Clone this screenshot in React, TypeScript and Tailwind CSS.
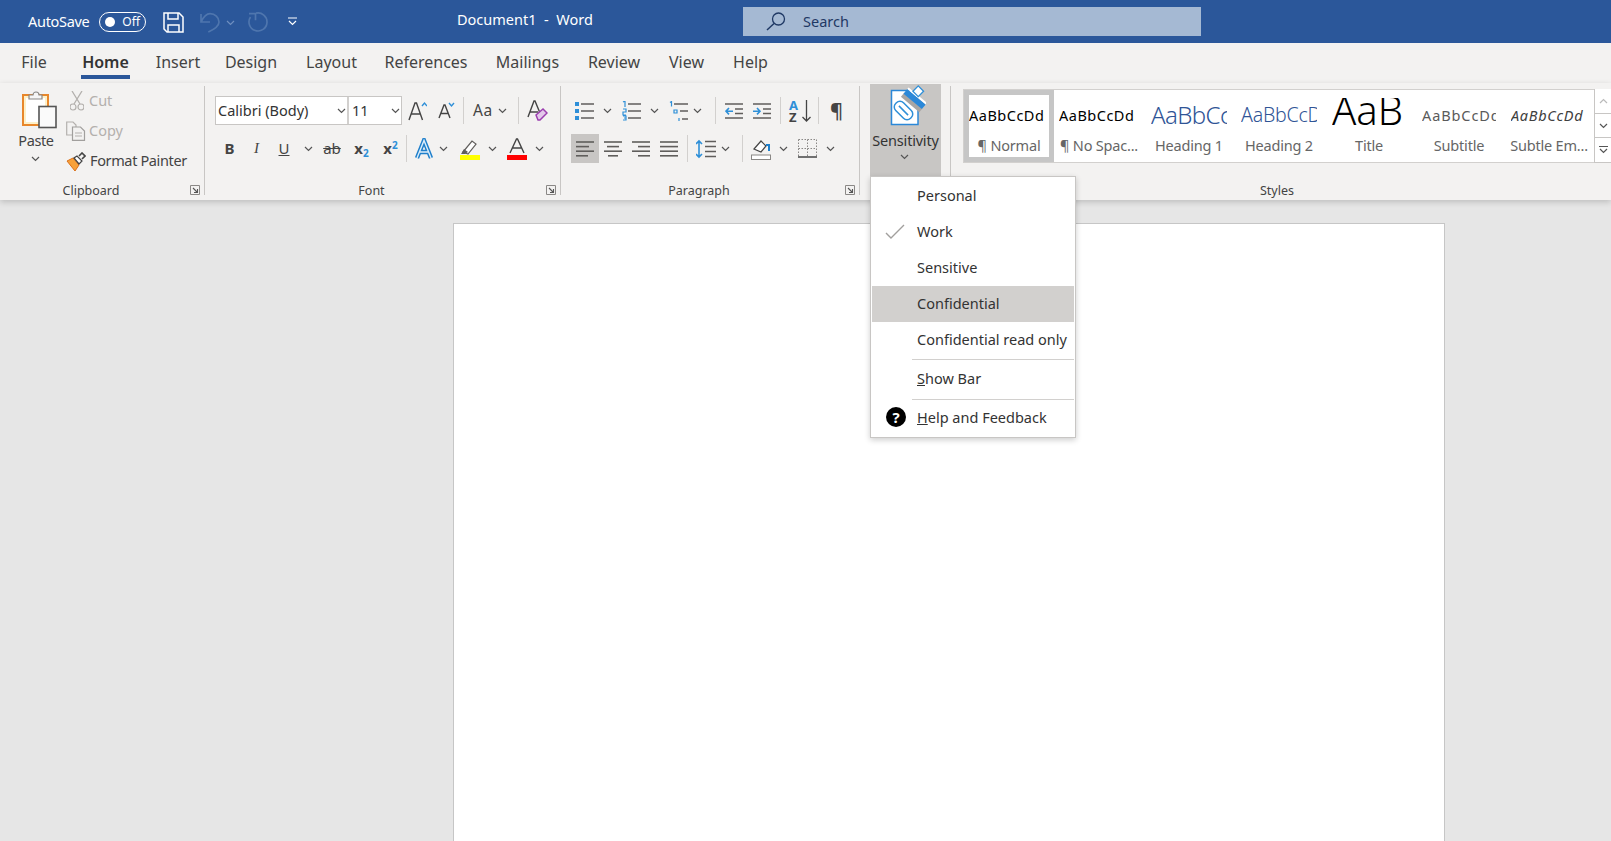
import type { ReactNode } from 'react'

const TABS = [
  { label: 'File', w: 'w-[62px]' },
  { label: 'Home', w: 'w-[81px]' },
  { label: 'Insert', w: 'w-[64px]' },
  { label: 'Design', w: 'w-[82px]' },
  { label: 'Layout', w: 'w-[79px]' },
  { label: 'References', w: 'w-[110px]' },
  { label: 'Mailings', w: 'w-[93px]' },
  { label: 'Review', w: 'w-[80px]' },
  { label: 'View', w: 'w-[65px]' },
  { label: 'Help', w: 'w-[63px]' },
]

const LBLUE = '#2e8fd8'

function Chev({ className = '', color = '#555' }: { className?: string; color?: string }) {
  return (
    <svg width="9" height="6" viewBox="0 0 9 6" className={`shrink-0 ${className}`}>
      <path d="M1 1l3.500 3.500L8 1" fill="none" stroke={color} strokeWidth="1.200" />
    </svg>
  )
}

function Sep({ className = '' }: { className?: string }) {
  return <div className={`w-px h-[27px] bg-[#d2d0ce] shrink-0 ${className}`} />
}

function Launcher() {
  return (
    <svg width="10" height="10" viewBox="0 0 10 10" className="absolute right-[4px] top-[4px]">
      <path d="M.5 9.500v-9h9v9z" fill="none" stroke="#8a8886" />
      <path d="M3 3l4.500 4.500M7.500 4v3.500H4" fill="none" stroke="#555" strokeWidth="1.100" />
    </svg>
  )
}

/* group = content + caption row */
function Group({ label, className, children }: { label: string; className: string; children: ReactNode }) {
  return (
    <div className={`flex flex-col shrink-0 ${className}`}>
      <div className="flex-1 flex flex-col min-h-0">{children}</div>
      <div className="relative h-[19px] pr-[22px] text-center text-[12.5px] leading-[19px] text-[#444]">
        {label}
        <Launcher />
      </div>
    </div>
  )
}

function Lines({ rows, className = '' }: { rows: [number, number][]; className?: string }) {
  return (
    <svg width="18" height="20" viewBox="0 0 18 20" className={`shrink-0 ${className}`}>
      {rows.map(([a, b], i) => (
        <path key={i} d={`M${a} ${3 + i * 4.6}H${b}`} stroke="#605e5c" strokeWidth="1.600" />
      ))}
    </svg>
  )
}

function ListIcon({ marks, className = '' }: { marks: ReactNode; className?: string }) {
  return (
    <svg width="19" height="20" viewBox="0 0 19 20" className={`shrink-0 ${className}`}>
      {marks}
      <path d="M6 3h13M6 10h13M6 17h13" stroke="#605e5c" strokeWidth="1.500" />
    </svg>
  )
}

function Indent({ dir, className = '' }: { dir: 'in' | 'out'; className?: string }) {
  return (
    <svg width="18" height="18" viewBox="0 0 18 18" className={`shrink-0 ${className}`}>
      <path d="M0 2h18M10 7h8M10 11.500h8M0 16h18" stroke="#605e5c" strokeWidth="1.500" />
      {dir === 'out' ? (
        <path d="M8 9.200H1M4 6l-3 3.200 3 3.200" fill="none" stroke={LBLUE} strokeWidth="1.600" />
      ) : (
        <path d="M0 9.200h7M4 6l3 3.200-3 3.200" fill="none" stroke={LBLUE} strokeWidth="1.600" />
      )}
    </svg>
  )
}

function PasteIcon() {
  return (
    <svg width="36" height="40" viewBox="0 0 36 40" className="ml-[21px] mt-[6px] shrink-0">
      <rect x="2" y="6" width="25" height="30" fill="#fdf0c8" stroke="#e8872b" strokeWidth="2" />
      <rect x="5" y="9" width="19" height="24" fill="#fff" />
      <path d="M8 10V6h4a3 3 0 0 1 6 0h3v4z" fill="#f5f5f5" stroke="#8a8886" strokeWidth="1.200" />
      <rect x="18" y="17.500" width="17" height="21" fill="#fafafa" stroke="#555" strokeWidth="1.600" />
    </svg>
  )
}

function SensitivityIcon() {
  return (
    <svg width="36" height="42" viewBox="0 0 36 42" className="ml-[20px] mt-px shrink-0">
      <rect x="1.500" y="5.500" width="26.500" height="34" fill="#fff" stroke="#2b88d8" strokeWidth="1.500" />
      <path d="M28 5h8v8l-8 8z" fill="#c8c6c4" />
      <path d="M18 4h10v4z" fill="#c8c6c4" />
      {/* capsule */}
      <g transform="rotate(45 13.500 25.500)">
        <rect x="3" y="20" width="21" height="11" rx="5" fill="#fff" stroke={LBLUE} strokeWidth="1.500" />
        <path d="M7 25.500h13" stroke={LBLUE} strokeWidth="1.500" />
      </g>
      {/* shadow, clamp and tab */}
      <g transform="rotate(40 23 16)">
        <rect x="11" y="16" width="24" height="4.500" fill="#a8a6a4" />
        <rect x="11" y="10.500" width="24" height="6" fill="#2b88d8" />
        <rect x="11" y="8.500" width="24" height="2" fill="#fff" />
      </g>
      <rect x="24.500" y="2.500" width="7.500" height="7.500" transform="rotate(45 28.250 6.250)" fill="#fff" stroke={LBLUE} strokeWidth="1.300" />
    </svg>
  )
}

function Clipboard() {
  return (
    <Group label="Clipboard" className="w-[204px]">
      <div className="flex">
        <div className="w-[66px] h-[92px] shrink-0 flex flex-col">
          <PasteIcon />
          <div className="text-center text-[14.5px] tracking-[-0.4px] leading-[18px] mt-[2px] ml-[3px] w-[66px] text-[#444]">Paste</div>
          <Chev className="ml-[31px] mt-[7px]" />
        </div>
        <div className="flex flex-col pt-[3px]">
          <div className="flex items-center h-[30px] text-[14.5px] text-[#b3b0ad]">
            <svg width="14" height="20" viewBox="0 0 14 20" className="ml-[4px] shrink-0">
              <path d="M2 0l8 13M12 0L4 13" stroke="#b3b0ad" strokeWidth="1.300" fill="none" />
              <circle cx="3" cy="16" r="3" fill="none" stroke="#b3b0ad" strokeWidth="1.200" />
              <circle cx="11" cy="16" r="3" fill="none" stroke="#b3b0ad" strokeWidth="1.200" />
            </svg>
            <span className="ml-[5px]">Cut</span>
          </div>
          <div className="flex items-center h-[30px] text-[14.5px] text-[#b3b0ad]">
            <svg width="20" height="20" viewBox="0 0 20 20" className="shrink-0">
              <path d="M7 14H.700V1H7l3 3v2" fill="none" stroke="#b3b0ad" strokeWidth="1.200" />
              <path d="M6.500 6h8l4 4v9.300h-12z" fill="#f3f2f1" stroke="#a19f9d" strokeWidth="1.200" />
              <path d="M9 12h7M9 15h7" stroke="#b3b0ad" />
            </svg>
            <span className="ml-[3px]">Copy</span>
          </div>
          <div className="flex items-center h-[30px] text-[14.5px] tracking-[-0.37px] text-[#444]">
            <svg width="20" height="19" viewBox="0 0 20 19" className="shrink-0">
              <path d="M1 9l6-3 6 7-4 6z" fill="#f7a13a" stroke="#d9701a" strokeWidth="1" />
              <path d="M8 6l5 6 3-3-5-5z" fill="#fff" stroke="#444" strokeWidth="1.200" />
              <path d="M13 4l3-3 3 3-3 3" fill="none" stroke="#444" strokeWidth="1.600" />
            </svg>
            <span className="ml-[4px]">Format Painter</span>
          </div>
        </div>
      </div>
    </Group>
  )
}

function FontGroup() {
  return (
    <Group label="Font" className="w-[355px]">
      <div className="flex items-center h-[29px] mt-[13px]">
        <div className="flex h-full ml-[10px] border border-[#c8c6c4] bg-white text-[14.5px] text-[#333] shrink-0">
          <div className="w-[133px] flex items-center justify-between pl-[2px] pr-[1px] border-r-2 border-[#d2d0ce]">
            <span>Calibri (Body)</span>
            <Chev />
          </div>
          <div className="w-[52px] flex items-center justify-between pl-[3px] pr-px">
            <span>11</span>
            <Chev />
          </div>
        </div>
        <svg width="19" height="20" viewBox="0 0 19 20" className="ml-[6px] shrink-0">
          <path d="M1 19L7 2h1.500l6 17M3.500 13h9" fill="none" stroke="#444" strokeWidth="1.400" />
          <path d="M14 5l2.500-3L19 5" fill="none" stroke={LBLUE} strokeWidth="1.400" />
        </svg>
        <svg width="17" height="17" viewBox="0 0 17 17" className="ml-[11px] shrink-0">
          <path d="M1 16L6 3h1l5 13M3 11.500h7" fill="none" stroke="#444" strokeWidth="1.400" />
          <path d="M11 1l2.500 3L16 1" fill="none" stroke={LBLUE} strokeWidth="1.400" />
        </svg>
        <Sep className="ml-[8px]" />
        <span className="ml-[9px] w-[22px] text-[15.5px] tracking-[0.5px] text-[#444] whitespace-nowrap shrink-0">Aa</span>
        <Chev className="ml-[3px]" />
        <Sep className="ml-[11px]" />
        <svg width="21" height="21" viewBox="0 0 21 21" className="ml-[8px] shrink-0">
          <path d="M1 17L7 1h1l5 12M3 12h8" fill="none" stroke="#444" strokeWidth="1.400" />
          <path d="M9 15l7-6 4 4-7 7h-2z" fill="#e3c8ea" stroke="#9b3eaf" strokeWidth="1.500" />
        </svg>
      </div>
      <div className="flex items-center h-[29px] mt-[9px] text-[#444]">
        <span className="ml-[11px] w-[27px] text-center font-bold text-[15px] shrink-0">B</span>
        <span className="w-[27px] text-center italic text-[15px] shrink-0 font-['Liberation_Serif',serif]">I</span>
        <span className="w-[28px] text-center underline text-[15px] shrink-0">U</span>
        <Chev className="ml-[6px]" />
        <span className="ml-[5px] w-[28px] text-center line-through text-[15px] shrink-0">ab</span>
        <span className="w-[31px] text-center font-bold text-[15px] shrink-0">
          x<sub className="text-[#2e8fd8] text-[10px] font-bold">2</sub>
        </span>
        <span className="w-[27px] text-center font-bold text-[15px] shrink-0">
          x<sup className="text-[#2e8fd8] text-[10px] font-bold">2</sup>
        </span>
        <Sep className="ml-[2px]" />
        <svg width="20" height="21" viewBox="0 0 20 21" className="ml-[7px] shrink-0">
          <path d="M3 20L10 2.500 17 20M5.500 14h9" fill="none" stroke="#1e7fcb" strokeWidth="4.400" />
          <path d="M3 20L10 2.500 17 20M5.500 14h9" fill="none" stroke="#dcedfa" strokeWidth="1.400" />
        </svg>
        <Chev className="ml-[5px]" />
        <svg width="20" height="22" viewBox="0 0 20 22" className="ml-[12px] shrink-0">
          <path d="M3 14l9-11 4 3-8 10z" fill="#fff" stroke="#605e5c" strokeWidth="1.200" />
          <path d="M1 16l3-5 4 3-3 2z" fill="#605e5c" />
          <rect y="17" width="20" height="5" fill="#ffff00" />
        </svg>
        <Chev className="ml-[8px]" />
        <svg width="20" height="22" viewBox="0 0 20 22" className="ml-[10px] shrink-0">
          <path d="M3 15L9.500 1h1L17 15M5.500 10h9" fill="none" stroke="#444" strokeWidth="1.400" />
          <rect y="17" width="20" height="5" fill="#ff0000" />
        </svg>
        <Chev className="ml-[8px]" />
      </div>
    </Group>
  )
}

function ParagraphGroup() {
  return (
    <Group label="Paragraph" className="w-[298px]">
      <div className="flex items-center h-[29px] mt-[13px]">
        <ListIcon
          className="ml-[14px]"
          marks={
            <>
              <rect y="1" width="4" height="4" fill={LBLUE} />
              <rect y="8" width="4" height="4" fill={LBLUE} />
              <rect y="15" width="4" height="4" fill={LBLUE} />
            </>
          }
        />
        <Chev className="ml-[9px]" />
        <ListIcon
          className="ml-[10px]"
          marks={
            <>
              <path d="M1 1l2-1v6M1 8h3v3H1v3h3M1 15h3v4H1M2 17h2" fill="none" stroke={LBLUE} strokeWidth="1.200" />
            </>
          }
        />
        <Chev className="ml-[9px]" />
        <svg width="19" height="20" viewBox="0 0 19 20" className="ml-[10px] shrink-0">
          <path d="M1 1.500l1.500-1v5M5 9h3v3H5zM10 17v3" fill="none" stroke={LBLUE} strokeWidth="1.200" />
          <path d="M5 3h14M11 10h8M13 18h6" stroke="#605e5c" strokeWidth="1.500" />
        </svg>
        <Chev className="ml-[5px]" />
        <Sep className="ml-[13px]" />
        <Indent dir="out" className="ml-[9px]" />
        <Indent dir="in" className="ml-[10px]" />
        <Sep className="ml-[9px]" />
        <div className="ml-[8px] w-[22px] flex items-center justify-between shrink-0">
          <div className="flex flex-col text-[13px] font-bold leading-[12px]">
            <span className="text-[#2e8fd8]">A</span>
            <span className="text-[#444]">Z</span>
          </div>
          <svg width="9" height="22" viewBox="0 0 9 22">
            <path d="M4.500 0v21M.5 17l4 4 4-4" fill="none" stroke="#444" strokeWidth="1.300" />
          </svg>
        </div>
        <Sep className="ml-[7px]" />
        <span className="ml-[11px] w-[12px] text-[20px] leading-none text-[#444] font-semibold shrink-0">¶</span>
      </div>
      <div className="flex items-center h-[29px] mt-[9px]">
        <div className="ml-[10px] w-[28px] h-[29px] bg-[#c8c6c4] flex items-center justify-center shrink-0">
          <Lines rows={[[0, 18], [0, 13], [0, 18], [0, 12]]} />
        </div>
        <Lines className="ml-[5px]" rows={[[0, 18], [3, 15], [0, 18], [4, 14]]} />
        <Lines className="ml-[10px]" rows={[[0, 18], [6, 18], [0, 18], [6, 18]]} />
        <Lines className="ml-[10px]" rows={[[0, 18], [0, 18], [0, 18], [0, 18]]} />
        <Sep className="ml-[9px]" />
        <svg width="20" height="20" viewBox="0 0 20 20" className="ml-[8px] shrink-0">
          <path d="M3 2v16M0 5l3-3 3 3M0 15l3 3 3-3" fill="none" stroke={LBLUE} strokeWidth="1.600" />
          <path d="M9 2.500h11M9 7.500h11M9 12.500h11M9 17.500h11" stroke="#605e5c" strokeWidth="1.500" />
        </svg>
        <Chev className="ml-[5px]" />
        <Sep className="ml-[12px]" />
        <svg width="20" height="22" viewBox="0 0 20 22" className="ml-[8px] shrink-0">
          <path d="M3 11l7-8 5 5-5 6z" fill="#fff" stroke="#444" strokeWidth="1.200" />
          <path d="M15 7l3 0 0 6" fill="none" stroke="#1e7fcb" strokeWidth="2" />
          <rect x=".5" y="17" width="19" height="4.500" fill="#fff" stroke="#8a8886" />
        </svg>
        <Chev className="ml-[8px]" />
        <svg width="19" height="19" viewBox="0 0 19 19" className="ml-[10px] shrink-0">
          <path d="M.5 .5h18v18M.5 .5v18M9.500 .5v18M.5 9.500h18" fill="none" stroke="#8a8886" strokeDasharray="1.500 1.500" />
          <path d="M0 18h19" stroke="#444" strokeWidth="1.500" />
        </svg>
        <Chev className="ml-[9px]" />
      </div>
    </Group>
  )
}

const STYLES = [
  { label: '¶ Normal', text: 'AaBbCcDd', cls: 'text-[14.5px] leading-[30px] text-black tracking-[0.5px]', box: 'w-[80px]', sel: true },
  { label: '¶ No Spac...', text: 'AaBbCcDd', cls: 'text-[14.5px] leading-[30px] text-black tracking-[0.5px]', box: 'w-[80px]' },
  { label: 'Heading 1', text: 'AaBbCcDd', cls: 'text-[24px] leading-[30px] font-light text-[#2f5496] tracking-[-0.6px]', box: 'w-[76px]' },
  { label: 'Heading 2', text: 'AaBbCcDd', cls: 'text-[19.5px] leading-[30px] font-light text-[#2f5496] tracking-[-0.2px]', box: 'w-[76px]' },
  { label: 'Title', text: 'AaB', cls: 'text-[40px] leading-[40px] font-light text-black -translate-y-[5.5px]', box: 'w-[74px]' },
  { label: 'Subtitle', text: 'AaBbCcDd', cls: 'text-[14.5px] leading-[30px] text-[#5a5a5a] tracking-[0.9px]', box: 'w-[74px]' },
  { label: 'Subtle Em...', text: 'AaBbCcDd', cls: 'text-[14.5px] leading-[30px] italic text-[#404040] tracking-[0.7px]', box: 'w-[76px]' },
]

function StylesGroup() {
  return (
    <div className="flex-1 flex flex-col min-w-0">
      <div className="flex h-[74px] ml-[12px] mt-[6px] shrink-0">
        <div className="flex flex-1 bg-white border-y border-l border-[#d2d0ce]">
          {STYLES.map(s => (
            <div
              key={s.label}
              className={`w-[90px] shrink-0 h-[72px] flex flex-col items-center ${s.sel ? 'border-[5px] border-[#c6c6c6]' : 'border-[5px] border-transparent'}`}
            >
              <div className={`h-[34px] overflow-hidden mt-[3px] flex items-center shrink-0 ${s.box}`}>
                <span className={`whitespace-nowrap ${s.cls}`}>{s.text}</span>
              </div>
              <div className="text-[14.5px] tracking-[-0.2px] leading-[18px] mt-[4px] text-[#666] whitespace-nowrap">{s.label}</div>
            </div>
          ))}
        </div>
        <div className="w-[17px] flex flex-col shrink-0 border-l border-[#c8c6c4] bg-[#f3f2f1]">
          <div className="h-[25px] flex items-center justify-center bg-white border-b border-[#c8c6c4]">
            <Chev className="rotate-180 opacity-40" />
          </div>
          <div className="h-[24px] flex items-center justify-center bg-white border-b border-[#c8c6c4]">
            <Chev />
          </div>
          <div className="flex-1 flex flex-col items-center justify-center bg-white border-b border-[#c8c6c4]">
            <div className="w-[9px] h-px bg-[#555] mb-[1px]" />
            <Chev />
          </div>
        </div>
      </div>
      <div className="flex-1" />
      <div className="h-[19px] pr-[8px] text-center text-[12.5px] leading-[19px] text-[#444]">Styles</div>
    </div>
  )
}

function MenuItem({ children, active, check }: { children: ReactNode; active?: boolean; check?: boolean }) {
  return (
    <div className={`h-[36px] flex items-center pl-[45px] whitespace-nowrap ${active ? 'bg-[#d2d0ce]' : ''}`}>
      {check && (
        <svg width="20" height="16" viewBox="0 0 20 16" className="absolute left-[14px]">
          <path d="M1 9l5 5L19 1" fill="none" stroke="#a19f9d" strokeWidth="1.400" />
        </svg>
      )}
      {children}
    </div>
  )
}

function SensitivityMenu() {
  return (
    <div className="absolute left-[870px] top-[176px] w-[206px] h-[262px] bg-white border border-[#c8c6c4] shadow-[0_2px_6px_rgba(0,0,0,0.2)] z-10 p-px text-[14.5px] text-[#333]">
      <MenuItem>Personal</MenuItem>
      <MenuItem check>Work</MenuItem>
      <MenuItem>Sensitive</MenuItem>
      <MenuItem active>Confidential</MenuItem>
      <MenuItem>Confidential read only</MenuItem>
      <div className="ml-[40px] h-px bg-[#d2d0ce] mt-[1px]" />
      <div className="h-[39px] pb-[2px] flex items-center pl-[45px]">
        <span><u>S</u>how Bar</span>
      </div>
      <div className="ml-[40px] h-px bg-[#d2d0ce]" />
      <div className="h-[37px] pb-[2px] flex items-center pl-[45px] relative">
        <span className="absolute left-[14px] top-[7px] w-[20px] h-[20px] rounded-full bg-black text-white text-[15px] font-bold leading-[20px] text-center">?</span>
        <span><u>H</u>elp and Feedback</span>
      </div>
    </div>
  )
}

export default function App() {
  return (
    <div className="relative h-[841px] overflow-hidden flex flex-col bg-[#e6e6e6] font-['Noto_Sans','Open_Sans',sans-serif]">
      {/* title bar */}
      <div className="h-[43px] bg-[#2b579a] flex items-center text-white shrink-0">
        <span className="ml-[28px] w-[63px] text-[14.5px] tracking-[-0.3px] whitespace-nowrap">AutoSave</span>
        <div className="ml-[8px] w-[47px] h-[20px] rounded-full border-[1.5px] border-white flex items-center justify-between pl-[5px] pr-[5px] text-[12px] shrink-0">
          <span className="w-[10px] h-[10px] rounded-full bg-white" />
          <span>Off</span>
        </div>
        <svg width="21" height="21" viewBox="0 0 21 21" className="ml-[17px] mt-[2px] shrink-0">
          <path d="M1 1h15l4 4v15H4l-3-3z" fill="none" stroke="#fff" strokeWidth="1.500" />
          <path d="M5 1v6h10V1M5 20v-7h11v7" fill="none" stroke="#fff" strokeWidth="1.500" />
        </svg>
        <svg width="20" height="21" viewBox="0 0 20 21" className="ml-[16px] mt-[2px] shrink-0">
          <path d="M1 2v8h9M1 10C4 4 7 1.700 10 1.700c5 0 9 4 9 8.300 0 4-4 7-10.700 10" fill="none" stroke="#4f76ae" strokeWidth="1.700" />
        </svg>
        <Chev className="ml-[6px] mt-[2px]" color="#6f8fbf" />
        <svg width="20" height="21" viewBox="0 0 20 21" className="ml-[13px] mt-[2px] shrink-0">
          <path d="M8 1.200A9 9 0 1 1 2.500 5" fill="none" stroke="#4f76ae" strokeWidth="1.700" />
          <path d="M1 1.700h6.500v6.500" fill="none" stroke="#4f76ae" strokeWidth="1.700" />
        </svg>
        <svg width="9" height="9" viewBox="0 0 9 9" className="ml-[20px] shrink-0">
          <path d="M0 1h9M1 4l3.500 3.500L8 4" fill="none" stroke="#fff" strokeWidth="1.200" />
        </svg>
        <span className="ml-[160px] w-[135px] text-[14.5px] whitespace-pre mb-[3px]">Document1  -  Word</span>
        <div className="ml-[151px] w-[458px] h-[29px] bg-[#a5b9d3] flex items-center text-[14.5px] text-[#1f3864] shrink-0">
          <svg width="20" height="19" viewBox="0 0 20 19" className="ml-[23px] shrink-0">
            <circle cx="12.500" cy="7" r="6" fill="none" stroke="#1f3864" strokeWidth="1.300" />
            <path d="M8 11.500L1 18" stroke="#1f3864" strokeWidth="1.500" />
          </svg>
          <span className="ml-[17px]">Search</span>
        </div>
      </div>

      {/* tabs */}
      <div className="h-[40px] bg-[#f3f2f1] flex pl-[3px] shrink-0">
        {TABS.map(t => (
          <div key={t.label} className={`${t.w} h-full flex flex-col items-center shrink-0 text-[16px] leading-[38px] text-[#444]`}>
            {t.label === 'Home' ? (
              <span className="font-semibold text-[#333] border-b-[4px] border-[#2b579a] h-[36px] px-[1px] leading-[38px]">{t.label}</span>
            ) : (
              t.label
            )}
          </div>
        ))}
      </div>

      {/* ribbon */}
      <div className="relative h-[117px] bg-[#f3f2f1] flex shadow-[0_2px_6px_rgba(0,0,0,0.18)] shrink-0">
        <Clipboard />
        <div className="w-px bg-[#c8c6c4] mt-[3px] mb-[5px] shrink-0" />
        <FontGroup />
        <div className="w-px bg-[#c8c6c4] mt-[3px] mb-[5px] shrink-0" />
        <ParagraphGroup />
        <div className="w-px bg-[#c8c6c4] mt-[3px] mb-[5px] shrink-0" />
        <div className="w-[90px] shrink-0">
          <div className="ml-[10px] mt-px w-[71px] h-[92px] bg-[#c8c6c4] flex flex-col">
            <SensitivityIcon />
            <div className="text-center text-[14.5px] tracking-[-0.2px] leading-[18px] mt-[4px] text-[#333]">Sensitivity</div>
            <Chev className="ml-[30px] mt-[5px]" />
          </div>
        </div>
        <div className="w-px bg-[#c8c6c4] mt-[3px] mb-[5px] shrink-0" />
        <StylesGroup />
      </div>

      {/* document */}
      <div className="flex-1 min-h-0">
        <div className="ml-[453px] mt-[23px] w-[992px] h-[900px] bg-white border border-[#c6c6c6]" />
      </div>

      <SensitivityMenu />
    </div>
  )
}
